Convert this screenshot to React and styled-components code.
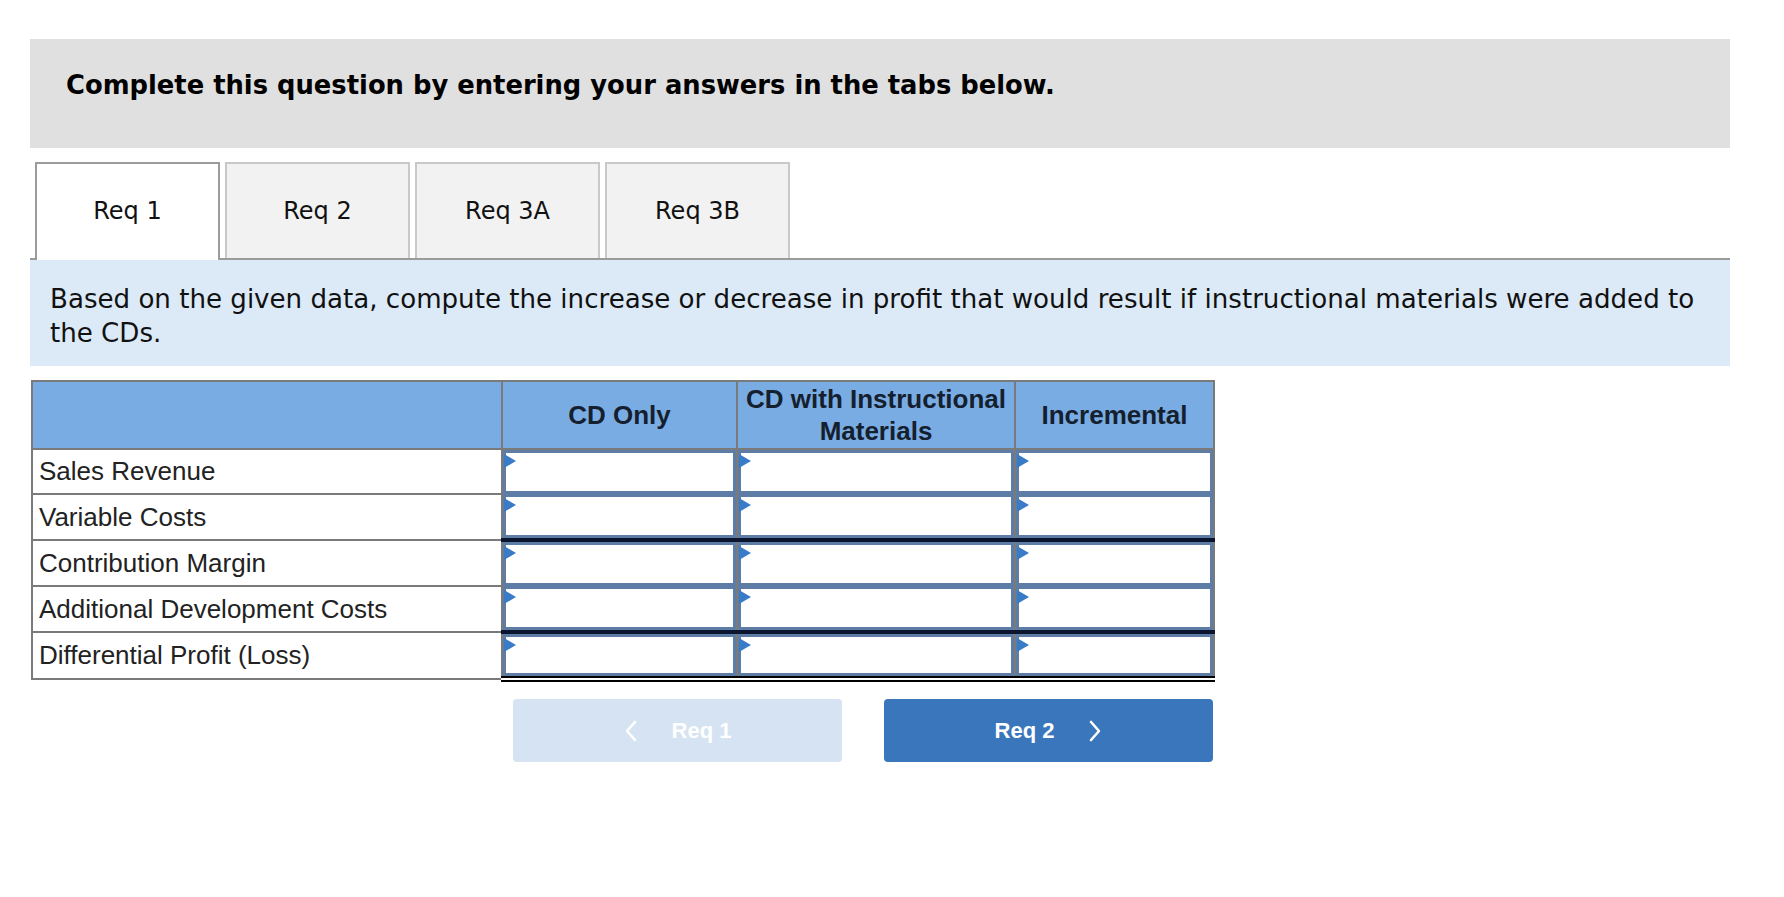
import React from "react";
import styled, { createGlobalStyle } from "styled-components";

const GlobalStyle = createGlobalStyle`
  html, body {
    margin: 0;
    background: #fff;
  }
  body {
    font-family: "DejaVu Sans", Verdana, sans-serif;
    color: #000;
  }
`;

const Page = styled.div`
  width: 1700px;
  padding: 39px 0 0 30px;
`;

const Banner = styled.div`
  height: 109px;
  box-sizing: border-box;
  padding: 31px 36px 0;
  background: #e0e0e0;
  font-size: 25.8px;
  font-weight: bold;
`;

const TabBar = styled.div`
  display: flex;
  align-items: flex-start;
  gap: 5px;
  margin-top: 14px;
  padding-left: 5px;
  position: relative;
  z-index: 1;
`;

const Tab = styled.div`
  width: 185px;
  height: ${(p) => (p.$active ? "98px" : "96px")};
  margin-bottom: ${(p) => (p.$active ? "-2px" : "0")};
  box-sizing: border-box;
  display: flex;
  align-items: center;
  justify-content: center;
  padding-bottom: ${(p) => (p.$active ? "2px" : "0")};
  background: ${(p) => (p.$active ? "#fff" : "#f2f2f2")};
  border: 2px solid ${(p) => (p.$active ? "#9b9b9b" : "#c9c9c9")};
  border-bottom: none;
  font-size: 24px;
  color: #111;
`;

const Prompt = styled.div`
  background: #dceaf8;
  border-top: 2px solid #9b9b9b;
  padding: 22px 20px 16px;
  font-size: 26.1px;
  line-height: 34px;
  color: #111;
`;

const Sheet = styled.table`
  margin: 14px 0 0 1px;
  width: 1182px;
  table-layout: fixed;
  border-collapse: collapse;
  font-family: "Liberation Sans", Arial, sans-serif;
  font-size: 26px;
`;

const HeadCell = styled.th`
  height: 66px;
  padding: 0 6px;
  background: #7aace4;
  border: 2px solid #7a7a7a;
  color: #15202e;
  font-weight: bold;
  line-height: 32px;
  text-align: center;
`;

const LabelCell = styled.td`
  height: 42px;
  padding: 0 6px;
  border: 2px solid #7a7a7a;
  color: #222;
  white-space: nowrap;
`;

const EntryCell = styled.td`
  padding: 0;
  border-left: 2px solid #7a7a7a;
  border-right: 2px solid #7a7a7a;
  border-bottom: ${(p) =>
    p.$rule === "single"
      ? "4px solid #0a1630"
      : p.$rule === "double"
      ? "6px double #000"
      : "0 solid transparent"};
`;

const EntryBox = styled.div`
  position: relative;
  height: ${(p) => (p.$short ? "42px" : "44px")};
  box-sizing: border-box;
  border: 3px solid #5e7da6;
  background: #fff;
`;

const Flag = styled.span`
  position: absolute;
  top: 1px;
  left: -2px;
  width: 0;
  height: 0;
  border-top: 7px solid transparent;
  border-bottom: 7px solid transparent;
  border-left: 12px solid #3a7bc8;
`;

const NavRow = styled.div`
  width: 1182px;
  margin: 17px 0 0 1px;
  display: flex;
  justify-content: flex-end;
  gap: 42px;
`;

const NavButton = styled.button`
  width: 329px;
  height: 63px;
  border: none;
  border-radius: 4px;
  background: ${(p) => (p.disabled ? "#d6e3f2" : "#3a76bc")};
  color: #fff;
  font-family: "Liberation Sans", Arial, sans-serif;
  font-size: 22px;
  font-weight: bold;
  display: flex;
  align-items: center;
  justify-content: center;
  gap: 34px;
  cursor: ${(p) => (p.disabled ? "default" : "pointer")};
`;

const Chevron = ({ dir }) => (
  <svg width="14" height="24" viewBox="0 0 14 24">
    <polyline
      points={dir === "left" ? "11,3 3,12 11,21" : "3,3 11,12 3,21"}
      fill="none"
      stroke="#fff"
      strokeWidth="2.6"
      strokeLinecap="round"
      strokeLinejoin="round"
    />
  </svg>
);

const tabs = ["Req 1", "Req 2", "Req 3A", "Req 3B"];

const rows = [
  { label: "Sales Revenue" },
  { label: "Variable Costs", rule: "single" },
  { label: "Contribution Margin" },
  { label: "Additional Development Costs", rule: "single" },
  { label: "Differential Profit (Loss)", rule: "double" },
];

export default function App() {
  return (
    <>
      <GlobalStyle />
      <Page>
        <Banner>Complete this question by entering your answers in the tabs below.</Banner>

        <TabBar>
          {tabs.map((t, i) => (
            <Tab key={t} $active={i === 0}>
              {t}
            </Tab>
          ))}
        </TabBar>

        <Prompt>
          Based on the given data, compute the increase or decrease in profit that would result if
          instructional materials were added to the CDs.
        </Prompt>

        <Sheet>
          <colgroup>
            <col style={{ width: 470 }} />
            <col style={{ width: 235 }} />
            <col style={{ width: 278 }} />
            <col style={{ width: 199 }} />
          </colgroup>
          <thead>
            <tr>
              <HeadCell />
              <HeadCell>CD Only</HeadCell>
              <HeadCell>CD with Instructional Materials</HeadCell>
              <HeadCell>Incremental</HeadCell>
            </tr>
          </thead>
          <tbody>
            {rows.map((r) => (
              <tr key={r.label}>
                <LabelCell>{r.label}</LabelCell>
                {[0, 1, 2].map((c) => (
                  <EntryCell key={c} $rule={r.rule}>
                    <EntryBox $short={r.rule === "double"}>
                      <Flag />
                    </EntryBox>
                  </EntryCell>
                ))}
              </tr>
            ))}
          </tbody>
        </Sheet>

        <NavRow>
          <NavButton disabled>
            <Chevron dir="left" />
            Req 1
          </NavButton>
          <NavButton>
            Req 2
            <Chevron dir="right" />
          </NavButton>
        </NavRow>
      </Page>
    </>
  );
}
